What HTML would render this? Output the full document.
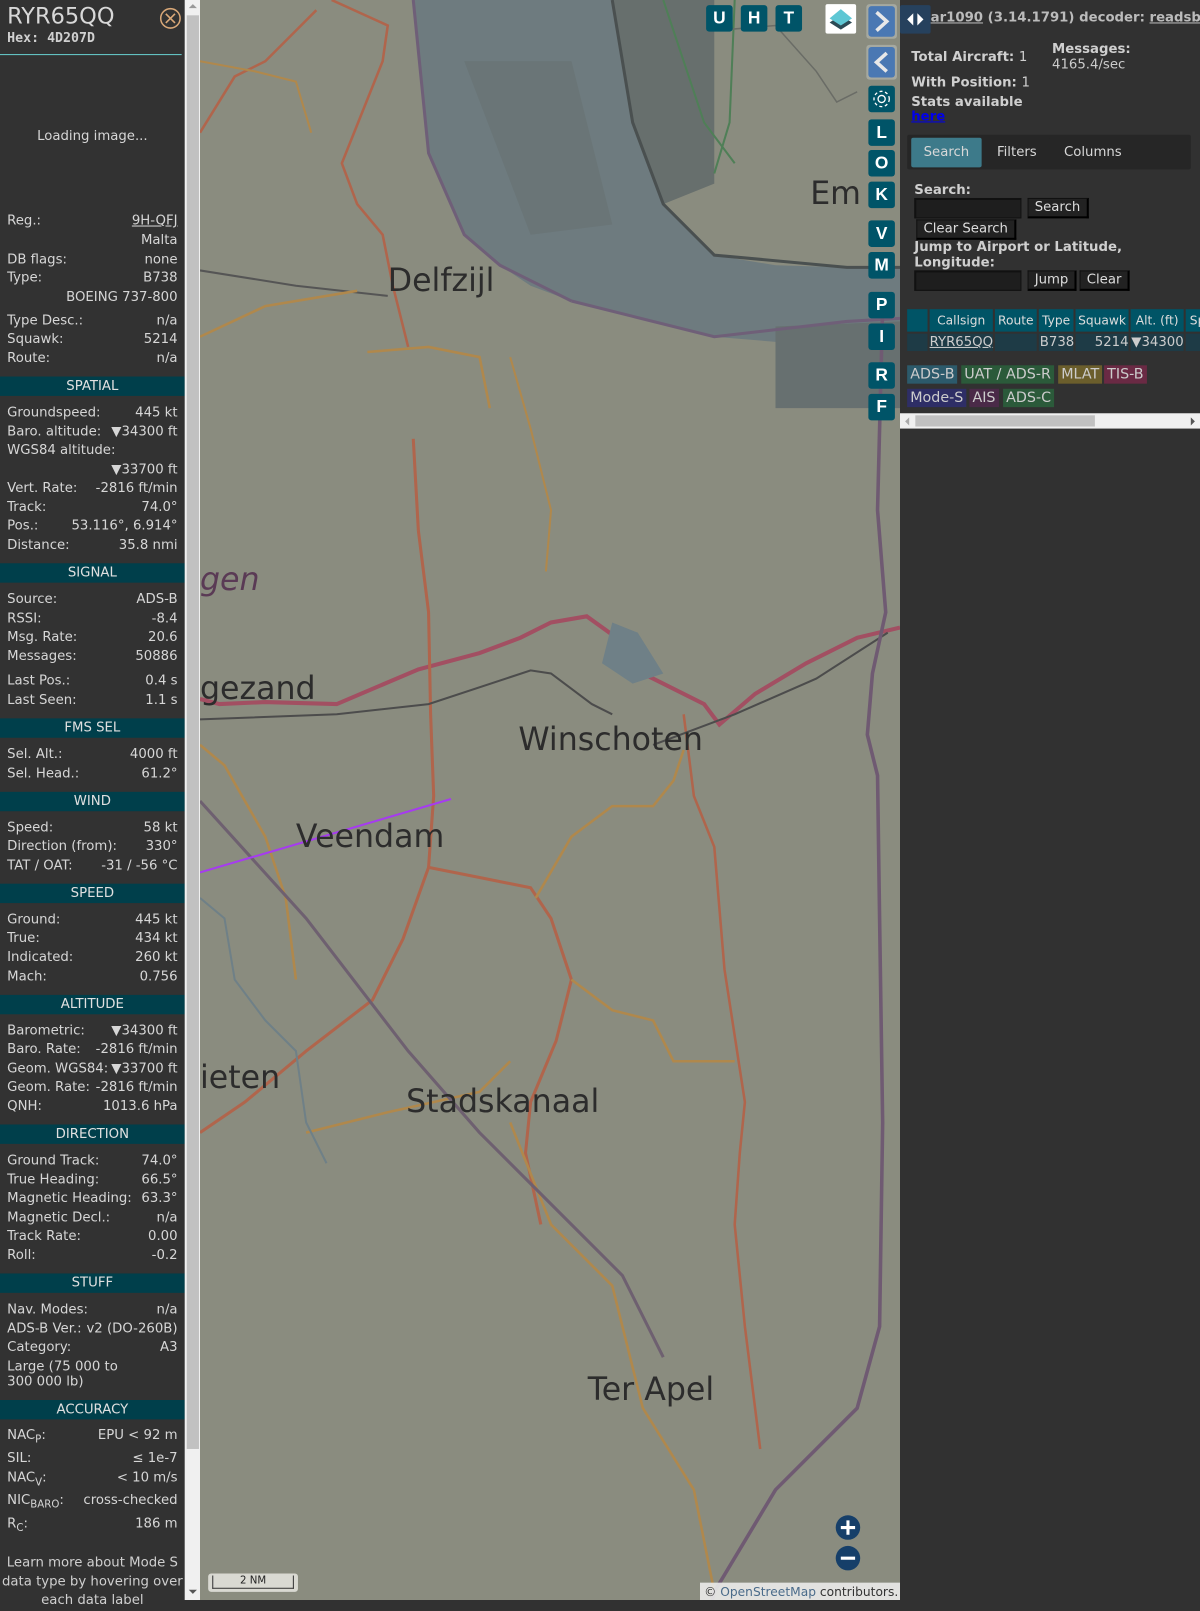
<!DOCTYPE html>
<html><head><meta charset="utf-8"><style>
*{box-sizing:border-box;margin:0;padding:0}
html,body{width:1200px;height:1600px;overflow:hidden;background:#313131}
#wrap{position:absolute;left:0;top:0;width:1176px;height:1568px;transform:scale(1.020408);transform-origin:0 0;font-family:"DejaVu Sans","Liberation Sans",sans-serif;font-size:13px;color:#d6d6d6}
#left{position:absolute;left:0;top:0;width:181px;height:1568px;background:#323232}
.r{position:absolute;left:7px;right:7px;height:18px;line-height:18px;white-space:nowrap}
.r .v{position:absolute;right:0;top:0}
.h{position:absolute;left:0;width:181px;height:19px;line-height:19px;background:#003f4b;text-align:center;color:#e0e0e0}
#sb{position:absolute;left:181px;top:0;width:15px;height:1568px;background:#f0f0f0}
#map{position:absolute;left:196px;top:0;width:686px;height:1568px;overflow:hidden}
.btn{position:absolute;width:26px;height:26px;background:#005468;border-radius:3px;color:#fff;font-weight:bold;font-size:17px;text-align:center;line-height:26px;font-family:"Liberation Sans",sans-serif}
#right{position:absolute;left:882px;top:0;width:294px;height:1568px;background:#313131}
.b{font-weight:bold;color:#cfcfcf;white-space:nowrap}
.tab{position:absolute;top:135px;height:29px;line-height:29px;text-align:center;background:#262626;color:#d8d8d8;border-radius:2px}
.inp{position:absolute;height:20px;background:#1e1e1e;border:1px solid #111;border-top:2px solid #111;border-left:2px solid #111}
.bt{position:absolute;height:20px;line-height:18px;background:#222;color:#ddd;border:1px solid #111;border-right:2px solid #000;border-bottom:2px solid #000;padding:0 6px;white-space:nowrap}
.th{position:absolute;top:303px;height:22px;line-height:22px;background:#005466;color:#ddd;text-align:center;font-size:12px}
.td{position:absolute;top:327px;height:17px;line-height:17px;background:#1e3b46;color:#ccc}
.lg{position:absolute;height:18px;line-height:18px;padding:0 3px;font-size:14px;white-space:nowrap}
</style></head><body><div id="wrap">
<div id="left">
<div style="position:absolute;left:7px;top:4px;font-size:22px;color:#d8d8d8">RYR65QQ</div>
<div style="position:absolute;left:7px;top:30px;font-size:13px;font-weight:bold;font-family:'DejaVu Sans Mono',monospace;color:#d0d0d0">Hex: 4D207D</div>
<svg style="position:absolute;left:156px;top:7px" width="22" height="22"><circle cx="11" cy="11" r="9.5" fill="none" stroke="#d9a878" stroke-width="1.5"/><path d="M6.5 6.5L15.5 15.5M15.5 6.5L6.5 15.5" stroke="#d9a878" stroke-width="1.6"/></svg>
<div style="position:absolute;left:0;top:53px;width:178px;height:1px;background:#6cc"></div>
<div style="position:absolute;left:0;top:126px;width:181px;text-align:center">Loading image...</div>

<div class="r" style="top:208px">Reg.:<span class="v" style="text-decoration:underline">9H-QFJ</span></div>
<div class="r" style="top:227px"><span class="v">Malta</span></div>
<div class="r" style="top:246px">DB flags:<span class="v">none</span></div>
<div class="r" style="top:264px">Type:<span class="v">B738</span></div>
<div class="r" style="top:283px"><span class="v">BOEING 737-800</span></div>
<div class="r" style="top:306px">Type Desc.:<span class="v">n/a</span></div>
<div class="r" style="top:324px">Squawk:<span class="v">5214</span></div>
<div class="r" style="top:343px">Route:<span class="v">n/a</span></div>
<div class="h" style="top:369px">SPATIAL</div>
<div class="r" style="top:396px">Groundspeed:<span class="v">445 kt</span></div>
<div class="r" style="top:415px">Baro. altitude:<span class="v">▼34300 ft</span></div>
<div class="r" style="top:433px">WGS84 altitude:</div>
<div class="r" style="top:452px"><span class="v">▼33700 ft</span></div>
<div class="r" style="top:470px">Vert. Rate:<span class="v">-2816 ft/min</span></div>
<div class="r" style="top:489px">Track:<span class="v">74.0°</span></div>
<div class="r" style="top:507px">Pos.:<span class="v">53.116°, 6.914°</span></div>
<div class="r" style="top:526px">Distance:<span class="v">35.8 nmi</span></div>
<div class="h" style="top:552px">SIGNAL</div>
<div class="r" style="top:579px">Source:<span class="v">ADS-B</span></div>
<div class="r" style="top:598px">RSSI:<span class="v">-8.4</span></div>
<div class="r" style="top:616px">Msg. Rate:<span class="v">20.6</span></div>
<div class="r" style="top:635px">Messages:<span class="v">50886</span></div>
<div class="r" style="top:659px">Last Pos.:<span class="v">0.4 s</span></div>
<div class="r" style="top:678px">Last Seen:<span class="v">1.1 s</span></div>
<div class="h" style="top:704px">FMS SEL</div>
<div class="r" style="top:731px">Sel. Alt.:<span class="v">4000 ft</span></div>
<div class="r" style="top:750px">Sel. Head.:<span class="v">61.2°</span></div>
<div class="h" style="top:776px">WIND</div>
<div class="r" style="top:803px">Speed:<span class="v">58 kt</span></div>
<div class="r" style="top:821px">Direction (from):<span class="v">330°</span></div>
<div class="r" style="top:840px">TAT / OAT:<span class="v">-31 / -56 °C</span></div>
<div class="h" style="top:866px">SPEED</div>
<div class="r" style="top:893px">Ground:<span class="v">445 kt</span></div>
<div class="r" style="top:911px">True:<span class="v">434 kt</span></div>
<div class="r" style="top:930px">Indicated:<span class="v">260 kt</span></div>
<div class="r" style="top:949px">Mach:<span class="v">0.756</span></div>
<div class="h" style="top:975px">ALTITUDE</div>
<div class="r" style="top:1002px">Barometric:<span class="v">▼34300 ft</span></div>
<div class="r" style="top:1020px">Baro. Rate:<span class="v">-2816 ft/min</span></div>
<div class="r" style="top:1039px">Geom. WGS84:<span class="v">▼33700 ft</span></div>
<div class="r" style="top:1057px">Geom. Rate:<span class="v">-2816 ft/min</span></div>
<div class="r" style="top:1076px">QNH:<span class="v">1013.6 hPa</span></div>
<div class="h" style="top:1102px">DIRECTION</div>
<div class="r" style="top:1129px">Ground Track:<span class="v">74.0°</span></div>
<div class="r" style="top:1148px">True Heading:<span class="v">66.5°</span></div>
<div class="r" style="top:1166px">Magnetic Heading:<span class="v">63.3°</span></div>
<div class="r" style="top:1185px">Magnetic Decl.:<span class="v">n/a</span></div>
<div class="r" style="top:1203px">Track Rate:<span class="v">0.00</span></div>
<div class="r" style="top:1222px">Roll:<span class="v">-0.2</span></div>
<div class="h" style="top:1248px">STUFF</div>
<div class="r" style="top:1275px">Nav. Modes:<span class="v">n/a</span></div>
<div class="r" style="top:1294px">ADS-B Ver.:<span class="v">v2 (DO-260B)</span></div>
<div class="r" style="top:1312px">Category:<span class="v">A3</span></div>
<div class="r" style="top:1331px">Large (75 000 to</div>
<div class="r" style="top:1346px">300 000 lb)</div>
<div class="h" style="top:1372px">ACCURACY</div>
<div class="r" style="top:1398px">NAC<sub style="font-size:10px">P</sub>:<span class="v">EPU &lt; 92 m</span></div>
<div class="r" style="top:1421px">SIL:<span class="v">≤ 1e-7</span></div>
<div class="r" style="top:1440px">NAC<sub style="font-size:10px">V</sub>:<span class="v">&lt; 10 m/s</span></div>
<div class="r" style="top:1462px">NIC<sub style="font-size:10px">BARO</sub>:<span class="v">cross-checked</span></div>
<div class="r" style="top:1485px">R<sub style="font-size:10px">C</sub>:<span class="v">186 m</span></div>
<div style="position:absolute;left:0;width:181px;top:1523px;text-align:center;line-height:18.5px;color:#cfcfcf">Learn more about Mode S data type by hovering over each data label</div>
</div>
<div id="sb"><div style="position:absolute;left:2px;top:15px;width:12px;height:1405px;background:#c1c1c1"></div>
<div style="position:absolute;left:4px;top:4px;border:4px solid transparent;border-bottom:4px solid #999;border-top:0"></div>
<div style="position:absolute;left:4px;top:1558px;border:4px solid transparent;border-top:4px solid #555;border-bottom:0"></div></div>

<div id="map">
<svg width="686" height="1568" viewBox="196 0 686 1568" style="position:absolute;left:0;top:0">
<rect x="196" y="0" width="686" height="1568" fill="#8a8c7f"/>
<path d="M405 0 L600 0 L620 120 L650 200 L700 250 L760 260 L830 262 L882 262 L882 320 L830 325 L760 335 L700 330 L620 310 L560 295 L520 280 L490 260 L455 230 L420 150 Z" fill="#6e7b7f"/>
<path d="M600 0 L700 0 L700 180 L650 200 L620 120 Z" fill="#676f6d"/>
<path d="M455 60 L560 60 L600 220 L520 230 Z" fill="#687272" opacity=".6"/>
<path d="M760 320 L882 315 L882 400 L760 400 Z" fill="#677070"/>
<path d="M405 0 L420 150 L455 230 L490 260 L560 295" fill="none" stroke="#6f5f78" stroke-width="3"/>
<path d="M600 0 L620 120 L650 200 L700 250 L830 262 L882 262" fill="none" stroke="#4a5050" stroke-width="3"/>
<path d="M560 295 L620 310 L700 330 L830 315 L882 312" fill="none" stroke="#6f5f78" stroke-width="3"/>
<path d="M650 0 L690 120 L720 160" fill="none" stroke="#4f7f57" stroke-width="2"/>
<path d="M720 0 L715 120 L700 170" fill="none" stroke="#4f7f57" stroke-width="2"/>
<path d="M700 30 L760 25 L800 70 L820 100 L840 90" fill="none" stroke="#6a6c66" stroke-width="1.5"/>
<path d="M196 265 L290 280 L380 290" fill="none" stroke="#555" stroke-width="2"/>
<path d="M196 130 L230 75 L260 60 L290 30 L310 10" fill="none" stroke="#b0654c" stroke-width="2.5"/>
<path d="M325 0 L380 25 L375 60 L335 160 L350 200 L375 230 L385 280 L400 340" fill="none" stroke="#b0654c" stroke-width="2.5"/>
<path d="M196 330 L260 300 L350 285" fill="none" stroke="#b0884c" stroke-width="2.5"/>
<path d="M360 345 L420 340 L470 350 L480 400" fill="none" stroke="#b0884c" stroke-width="2.5"/>
<path d="M196 60 L250 70 L290 80 L305 130" fill="none" stroke="#b0884c" stroke-width="2"/>
<path d="M500 350 L520 420 L540 500 L535 560" fill="none" stroke="#b0884c" stroke-width="2"/>
<path d="M196 685 L215 690 L260 688 L330 690 L410 656 L470 640 L510 625 L540 610 L575 604 L600 622 L620 655 L690 690 L705 710 L740 680 L790 650 L840 625 L882 615" fill="none" stroke="#a24f62" stroke-width="4"/>
<path d="M410 520 L420 600 L422 700 L425 780 L420 850 L395 920 L365 980 L300 1030 L240 1080 L196 1110" fill="none" stroke="#b0654c" stroke-width="3"/>
<path d="M405 430 L410 520" fill="none" stroke="#b0654c" stroke-width="3"/>
<path d="M420 850 L470 860 L520 870 L540 900 L560 960 L545 1020 L520 1080 L515 1130 L530 1200" fill="none" stroke="#b0654c" stroke-width="3"/>
<path d="M670 700 L680 780 L700 830 L710 950 L730 1080 L725 1130 L720 1200 L730 1300 L745 1420" fill="none" stroke="#b0654c" stroke-width="2.5"/>
<path d="M525 880 L560 820 L600 790 L640 790 L660 765 L670 735" fill="none" stroke="#b0884c" stroke-width="2.5"/>
<path d="M560 960 L600 990 L640 1000 L660 1040 L720 1040" fill="none" stroke="#b0884c" stroke-width="2.5"/>
<path d="M196 730 L220 750 L260 820 L280 880 L290 960" fill="none" stroke="#b0884c" stroke-width="2.5"/>
<path d="M300 1110 L380 1090 L470 1070 L500 1040" fill="none" stroke="#b0884c" stroke-width="2.5"/>
<path d="M500 1100 L540 1200 L600 1260 L630 1380 L680 1460 L700 1560" fill="none" stroke="#b0884c" stroke-width="2.5"/>
<path d="M196 705 L330 700 L420 690 L520 657 L540 660 L580 690 L600 700 M640 730 L720 700 L800 665 L870 620" fill="none" stroke="#4c4c4c" stroke-width="2"/>
<path d="M196 785 L300 900 L400 1030 L470 1110 L560 1200 L610 1250 L650 1330" fill="none" stroke="#6e6070" stroke-width="3"/>
<path d="M600 610 L625 620 L650 660 L620 670 L590 650 Z" fill="#6f8087"/>
<path d="M196 880 L220 900 L230 960 L260 1000 L290 1030 L300 1100 L320 1140" fill="none" stroke="#6f8087" stroke-width="2"/>
<path d="M865 300 L860 500 L868 600 L855 660 L850 720 L860 760 L862 900 L865 1100 L862 1300 L840 1380 L760 1460 L700 1560 L690 1600" fill="none" stroke="#6f5a72" stroke-width="3.5"/>
<path d="M196 855 L442 783" stroke="#a63bf0" stroke-width="2"/>
<g font-family="DejaVu Sans,sans-serif" fill="#2c2c2c" font-size="31">
<text x="380" y="285">Delfzijl</text>
<text x="794" y="200">Em</text>
<text x="196" y="578" font-style="italic" fill="#5a3a55">gen</text>
<text x="196" y="685">gezand</text>
<text x="508" y="735">Winschoten</text>
<text x="290" y="830">Veendam</text>
<text x="196" y="1066">ieten</text>
<text x="398" y="1090">Stadskanaal</text>
<text x="576" y="1372">Ter Apel</text>
<text x="328" y="1598">Emmen</text>
</g>
</svg>
<div class="btn" style="left:496px;top:5px">U</div>
<div class="btn" style="left:530px;top:5px">H</div>
<div class="btn" style="left:564px;top:5px">T</div>
<div style="position:absolute;left:613px;top:4px;width:30px;height:29px;background:#fff;border-radius:2px">
<svg width="30" height="29"><path d="M4 18 L15 25 L26 18 L15 11Z" fill="#2c4a55"/><path d="M4 14 L15 21 L26 14 L15 5Z" fill="#5ec7d4"/></svg></div>
<div style="position:absolute;left:653px;top:4px;width:30px;height:34px;background:#a6a9a0;border-radius:3px"><div style="position:absolute;left:2px;top:2px;width:26px;height:30px;background:#4a78b3;border-radius:3px"></div><svg style="position:absolute;left:0;top:0" width="30" height="34"><path d="M10 8 L20 17 L10 26" fill="none" stroke="#e8e8e8" stroke-width="3.5"/></svg></div>
<div style="position:absolute;left:653px;top:44px;width:30px;height:34px;background:#a6a9a0;border-radius:3px"><div style="position:absolute;left:2px;top:2px;width:26px;height:30px;background:#4a78b3;border-radius:3px"></div><svg style="position:absolute;left:0;top:0" width="30" height="34"><path d="M20 8 L10 17 L20 26" fill="none" stroke="#e8e8e8" stroke-width="3.5"/></svg></div>
<div class="btn" style="left:655px;top:84px"><svg width="26" height="26"><circle cx="13" cy="13" r="3.5" fill="none" stroke="#fff" stroke-width="1.3"/><circle cx="13" cy="13" r="7.5" fill="none" stroke="#fff" stroke-width="1.3" stroke-dasharray="3 2.5"/></svg></div>
<div class="btn" style="left:655px;top:117px">L</div>
<div class="btn" style="left:655px;top:147px">O</div>
<div class="btn" style="left:655px;top:178px">K</div>
<div class="btn" style="left:655px;top:216px">V</div>
<div class="btn" style="left:655px;top:247px">M</div>
<div class="btn" style="left:655px;top:286px">P</div>
<div class="btn" style="left:655px;top:317px">I</div>
<div class="btn" style="left:655px;top:355px">R</div>
<div class="btn" style="left:655px;top:386px">F</div>
<svg style="position:absolute;left:622px;top:1484px" width="26" height="58"><circle cx="13" cy="13" r="12" fill="#163f69"/><path d="M6 13H20M13 6V20" stroke="#fff" stroke-width="3"/><circle cx="13" cy="43" r="12" fill="#163f69"/><path d="M6 43H20" stroke="#fff" stroke-width="3"/></svg>
<div style="position:absolute;left:8px;top:1542px;width:88px;height:18px;background:rgba(230,230,225,.85);border-radius:3px"><div style="position:absolute;left:4px;top:2px;width:80px;height:13px;border:1px solid #333;border-top:0;font-size:10px;text-align:center;line-height:12px;color:#222">2 NM</div></div>
<div style="position:absolute;left:490px;top:1551px;width:196px;height:18px;background:rgba(235,235,235,.9);font-size:12px;line-height:18px;color:#333;padding-left:4px;white-space:nowrap">© <span style="color:#4a6b8a">OpenStreetMap</span> contributors.</div>
</div>

<div id="right">
<div style="position:absolute;left:0;top:5px;width:30px;height:28px;background:#26415d;border-radius:2px"><svg width="30" height="28"><path d="M7 14L13 8V20Z M23 14L17 8V20Z" fill="#fff"/></svg></div>
<div style="position:absolute;left:30px;top:10px;font-weight:bold;color:#bbb;font-size:13px;white-space:nowrap"><u>ar1090</u> (3.14.1791) decoder: <u>readsb</u></div>
<div class="b" style="position:absolute;left:11px;top:49px">Total Aircraft: <span style="font-weight:normal">1</span></div>
<div class="b" style="position:absolute;left:149px;top:41px">Messages:</div>
<div style="position:absolute;left:149px;top:56px;color:#ccc">4165.4/sec</div>
<div class="b" style="position:absolute;left:11px;top:74px">With Position: <span style="font-weight:normal">1</span></div>
<div class="b" style="position:absolute;left:11px;top:93px">Stats available</div>
<div style="position:absolute;left:11px;top:107px;color:#0000ee;font-weight:bold;text-decoration:underline">here</div>
<div style="position:absolute;left:7px;top:132px;width:278px;height:34px;background:#262626;border-radius:2px"></div>
<div class="tab" style="left:11px;width:69px;background:#3d7a8a">Search</div>
<div class="tab" style="left:82px;width:65px">Filters</div>
<div class="tab" style="left:149px;width:80px">Columns</div>
<div class="b" style="position:absolute;left:14px;top:179px">Search:</div>
<div class="inp" style="left:14px;top:194px;width:105px"></div>
<div class="bt" style="left:125px;top:194px">Search</div>
<div class="bt" style="left:16px;top:215px">Clear Search</div>
<div class="b" style="position:absolute;left:14px;top:235px">Jump to Airport or Latitude,</div>
<div class="b" style="position:absolute;left:14px;top:250px">Longitude:</div>
<div class="inp" style="left:14px;top:265px;width:105px"></div>
<div class="bt" style="left:125px;top:265px">Jump</div>
<div class="bt" style="left:176px;top:265px">Clear</div>
<div class="th" style="left:7px;width:20px"></div>
<div class="th" style="left:29px;width:62px">Callsign</div>
<div class="th" style="left:93px;width:41px">Route</div>
<div class="th" style="left:136px;width:34px">Type</div>
<div class="th" style="left:172px;width:52px">Squawk</div>
<div class="th" style="left:226px;width:52px">Alt. (ft)</div>
<div class="th" style="left:280px;width:14px;text-align:left;padding-left:4px;overflow:hidden">Sp</div>
<div class="td" style="left:7px;width:20px"></div>
<div class="td" style="left:29px;width:62px;text-decoration:underline">RYR65QQ</div>
<div class="td" style="left:93px;width:41px"></div>
<div class="td" style="left:136px;width:34px;padding-left:1px">B738</div>
<div class="td" style="left:172px;width:52px;text-align:right">5214</div>
<div class="td" style="left:226px;width:52px;text-align:right">▼34300</div>
<div class="td" style="left:280px;width:14px"></div>
<div class="lg" style="left:7px;top:358px;background:#2c5a6b;color:#ccc">ADS-B</div>
<div class="lg" style="left:60px;top:358px;background:#2b5a3a;color:#ccc">UAT / ADS-R</div>
<div class="lg" style="left:155px;top:358px;background:#6b5e2c;color:#ccc">MLAT</div>
<div class="lg" style="left:200px;top:358px;background:#6a2a44;color:#ccc">TIS-B</div>
<div class="lg" style="left:7px;top:381px;background:#2e2e66;color:#ccc">Mode-S</div>
<div class="lg" style="left:68px;top:381px;background:#4a2a48;color:#ccc">AIS</div>
<div class="lg" style="left:101px;top:381px;background:#2b5a3a;color:#ccc">ADS-C</div>
<div style="position:absolute;left:0;top:405px;width:294px;height:15px;background:#f0f0f0"><div style="position:absolute;left:15px;top:2px;width:176px;height:11px;background:#c1c1c1"></div>
<div style="position:absolute;left:5px;top:4px;border:4px solid transparent;border-right:4px solid #aaa;border-left:0"></div>
<div style="position:absolute;left:285px;top:4px;border:4px solid transparent;border-left:4px solid #555;border-right:0"></div></div>
</div>
</div></body></html>
